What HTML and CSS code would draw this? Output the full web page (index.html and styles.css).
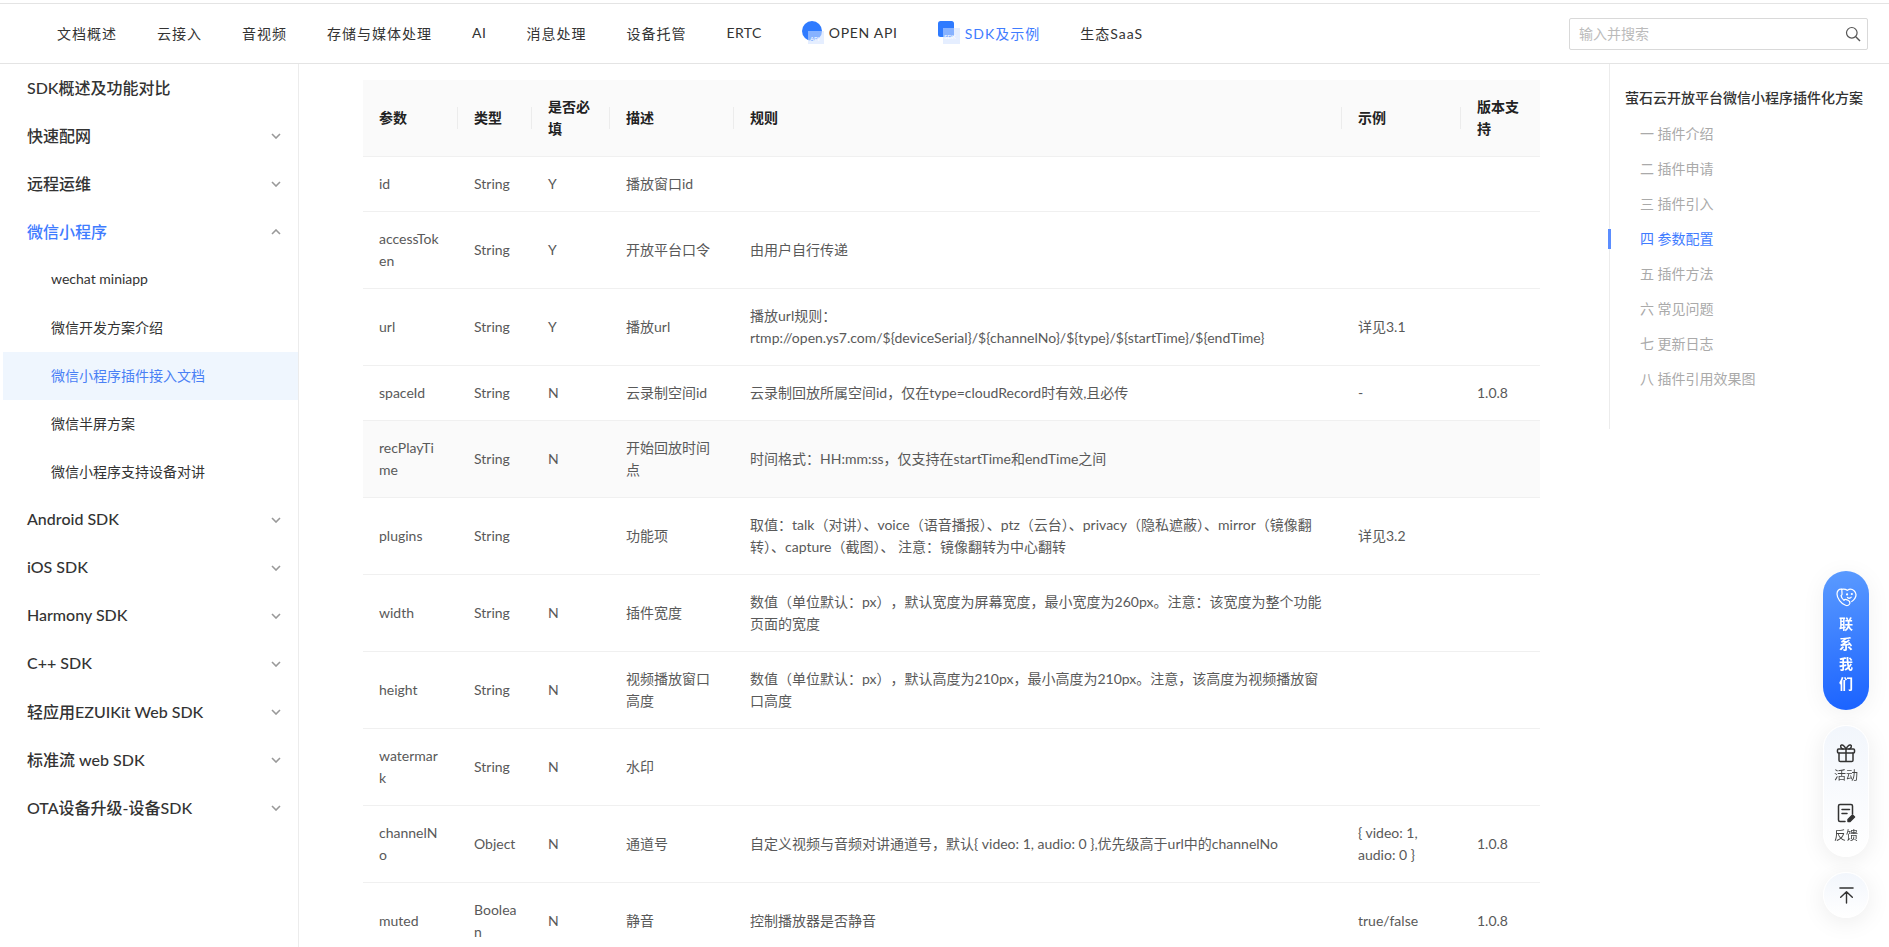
FILE: index.html
```html
<!DOCTYPE html>
<html lang="zh-CN">
<head>
<meta charset="utf-8">
<title>微信小程序插件接入文档</title>
<link rel="stylesheet" href="styles.css">
</head>
<body>
<div class="page">
  <header class="topbar">
    <nav class="topnav">
      <a>文档概述</a><a>云接入</a><a>音视频</a><a>存储与媒体处理</a><a class="ls-ai">AI</a><a>消息处理</a><a>设备托管</a><a class="ls-ertc">ERTC</a>
      <a class="with-icon ls-api">
        <svg class="nav-icon" viewBox="0 0 22 23"><circle cx="10" cy="10" r="10" fill="#2f7bff"/><rect x="6" y="10" width="16" height="13" fill="#cfe0ff" fill-opacity=".55"/><text x="8" y="20" class="nav-icon-text">API</text></svg>
        OPEN API</a>
      <a class="with-icon active">
        <svg class="nav-icon" viewBox="0 0 22 23"><rect x="0" y="0" width="16" height="16" rx="2.500" fill="#2f7bff"/><rect x="5" y="7" width="17" height="16" fill="#cfe0ff" fill-opacity=".55"/><text x="6" y="18" class="nav-icon-text">SDK</text></svg>
        SDK及示例</a>
      <a>生态SaaS</a>
    </nav>
    <div class="search">
      <span class="search-ph">输入并搜索</span>
      <svg class="search-icon" viewBox="0 0 16 16"><circle cx="6.800" cy="6.800" r="5.300" fill="none" stroke="#555" stroke-width="1.200"/><path d="M10.800 10.800 15 15" stroke="#555" stroke-width="1.400" fill="none"/></svg>
    </div>
  </header>
  <div class="content">
    <aside class="sidebar">
      <div class="side-item">SDK概述及功能对比</div>
      <div class="side-item">快速配网<svg class="chev" viewBox="0 0 10 6"><path d="M1 1l4 4 4-4"/></svg></div>
      <div class="side-item">远程运维<svg class="chev" viewBox="0 0 10 6"><path d="M1 1l4 4 4-4"/></svg></div>
      <div class="side-item open">微信小程序<svg class="chev" viewBox="0 0 10 6"><path d="M1 5l4-4 4 4"/></svg></div>
      <div class="side-sub">wechat miniapp</div>
      <div class="side-sub">微信开发方案介绍</div>
      <div class="side-sub current">微信小程序插件接入文档</div>
      <div class="side-sub">微信半屏方案</div>
      <div class="side-sub">微信小程序支持设备对讲</div>
      <div class="side-item">Android SDK<svg class="chev" viewBox="0 0 10 6"><path d="M1 1l4 4 4-4"/></svg></div>
      <div class="side-item">iOS SDK<svg class="chev" viewBox="0 0 10 6"><path d="M1 1l4 4 4-4"/></svg></div>
      <div class="side-item">Harmony SDK<svg class="chev" viewBox="0 0 10 6"><path d="M1 1l4 4 4-4"/></svg></div>
      <div class="side-item">C++ SDK<svg class="chev" viewBox="0 0 10 6"><path d="M1 1l4 4 4-4"/></svg></div>
      <div class="side-item">轻应用EZUIKit Web SDK<svg class="chev" viewBox="0 0 10 6"><path d="M1 1l4 4 4-4"/></svg></div>
      <div class="side-item">标准流 web SDK<svg class="chev" viewBox="0 0 10 6"><path d="M1 1l4 4 4-4"/></svg></div>
      <div class="side-item">OTA设备升级-设备SDK<svg class="chev" viewBox="0 0 10 6"><path d="M1 1l4 4 4-4"/></svg></div>
    </aside>
    <main class="main">
      <table class="params">
        <colgroup><col class="c1"><col class="c2"><col class="c3"><col class="c4"><col class="c5"><col class="c6"><col class="c7"></colgroup>
        <thead>
          <tr><th>参数</th><th>类型</th><th>是否必填</th><th>描述</th><th>规则</th><th>示例</th><th>版本支持</th></tr>
        </thead>
        <tbody>
          <tr><td>id</td><td>String</td><td>Y</td><td>播放窗口id</td><td></td><td></td><td></td></tr>
          <tr><td>accessToken</td><td>String</td><td>Y</td><td>开放平台口令</td><td>由用户自行传递</td><td></td><td></td></tr>
          <tr><td>url</td><td>String</td><td>Y</td><td>播放url</td><td>播放url规则：<br>rtmp://open.ys7.com/${deviceSerial}/${channelNo}/${type}/${startTime}/${endTime}</td><td>详见3.1</td><td></td></tr>
          <tr><td>spaceId</td><td>String</td><td>N</td><td>云录制空间id</td><td>云录制回放所属空间id，仅在type=cloudRecord时有效,且必传</td><td>-</td><td>1.0.8</td></tr>
          <tr class="hover"><td>recPlayTime</td><td>String</td><td>N</td><td>开始回放时间点</td><td>时间格式：HH:mm:ss，仅支持在startTime和endTime之间</td><td></td><td></td></tr>
          <tr><td>plugins</td><td>String</td><td></td><td>功能项</td><td class="trim">取值：talk（对讲）、voice（语音播报）、ptz（云台）、privacy（隐私遮蔽）、mirror（镜像翻转）、capture（截图）、 注意：镜像翻转为中心翻转</td><td>详见3.2</td><td></td></tr>
          <tr><td>width</td><td>String</td><td>N</td><td>插件宽度</td><td>数值（单位默认：px），默认宽度为屏幕宽度，最小宽度为260px。注意：该宽度为整个功能页面的宽度</td><td></td><td></td></tr>
          <tr><td>height</td><td>String</td><td>N</td><td>视频播放窗口高度</td><td>数值（单位默认：px），默认高度为210px，最小高度为210px。注意，该高度为视频播放窗口高度</td><td></td><td></td></tr>
          <tr><td>watermark</td><td>String</td><td>N</td><td>水印</td><td></td><td></td><td></td></tr>
          <tr><td>channelNo</td><td>Object</td><td>N</td><td>通道号</td><td>自定义视频与音频对讲通道号，默认{ video: 1, audio: 0 },优先级高于url中的channelNo</td><td>{ video: 1, audio: 0 }</td><td>1.0.8</td></tr>
          <tr><td>muted</td><td>Boolean</td><td>N</td><td>静音</td><td>控制播放器是否静音</td><td>true/false</td><td>1.0.8</td></tr>
        </tbody>
      </table>
    </main>
    <aside class="toc">
      <div class="toc-title">萤石云开放平台微信小程序插件化方案</div>
      <div class="toc-item">一 插件介绍</div>
      <div class="toc-item">二 插件申请</div>
      <div class="toc-item">三 插件引入</div>
      <div class="toc-item active">四 参数配置</div>
      <div class="toc-item">五 插件方法</div>
      <div class="toc-item">六 常见问题</div>
      <div class="toc-item">七 更新日志</div>
      <div class="toc-item">八 插件引用效果图</div>
    </aside>
  </div>
</div>
<div class="floaters">
  <div class="contact">
    <svg class="contact-icon" viewBox="0 0 22 20" fill="none" stroke="#fff" stroke-width="1.300" stroke-linecap="round" stroke-linejoin="round">
      <path d="M6 1.200C3 .8 1 3 1 6.200c0 4.600 4.200 10 9 12 2 .8 4-.2 4.500-2 .3-1.500-.6-2.700-2-3.300l-1.600-.6c-1-.4-2-.1-2.600.7C6.500 11.500 5.500 9.500 5.300 8c.8-.4 1.200-1.200 1-2.100L6 1.200z"/>
      <path d="M6 1.400C8.500.6 10.500 1.500 12 2.500c2-1.600 5-1.400 7 .4 2.200 2 2.400 5.300.8 8-.8 1.300-2 2.500-3.300 3.300"/>
      <circle cx="11.600" cy="6.800" r=".5" fill="#fff"/><circle cx="16.600" cy="6.300" r=".5" fill="#fff"/>
      <path d="M12 10c1.300 1 3 .8 4-.4"/>
    </svg>
    <span>联</span><span>系</span><span>我</span><span>们</span>
  </div>
  <div class="tools">
    <div class="tool">
      <svg class="tool-icon" viewBox="0 0 20 20" fill="none" stroke="#333" stroke-width="1.500" stroke-linejoin="round" stroke-linecap="round">
        <rect x="1.500" y="6" width="17" height="4" rx="1"/>
        <path d="M3 10v7.200a1.300 1.300 0 0 0 1.300 1.300h11.400a1.300 1.300 0 0 0 1.300-1.300V10M10 6v12.500"/>
        <path d="M10 6C8.500 3 7 1.500 5.500 2S4.500 5.500 7 6M10 6c1.500-3 3-4.500 4.500-4S15.500 5.500 13 6"/>
      </svg>
      <span>活动</span>
    </div>
    <div class="tool">
      <svg class="tool-icon" viewBox="0 0 20 20" fill="none" stroke="#333" stroke-width="1.500" stroke-linejoin="round" stroke-linecap="round">
        <path d="M9 18.500H4a1.500 1.500 0 0 1-1.500-1.500V3A1.500 1.500 0 0 1 4 1.500h11A1.500 1.500 0 0 1 16.500 3v8"/>
        <path d="M6 6.500h7.500M6 10.500h5"/>
        <path d="M12 18.500v-2l4.500-4.500 2 2-4.500 4.500z" fill="#333"/>
      </svg>
      <span>反馈</span>
    </div>
  </div>
  <div class="totop">
    <svg class="totop-icon" viewBox="0 0 16 18" fill="none" stroke="#333" stroke-width="1.500" stroke-linecap="round" stroke-linejoin="round">
      <path d="M1 1.500h14M8 5.500v12M1.800 11.500 8 5.500l6.200 6"/>
    </svg>
  </div>
</div>
</body>
</html>
```
FILE: styles.css
```css
* { box-sizing: border-box; }
html, body { margin: 0; padding: 0; height: 100%; overflow: hidden; background: #fff; }
body {
  font-family: Lato, "Noto Sans CJK SC", sans-serif;
  font-size: 14px;
  color: #333;
  text-spacing-trim: space-all;
}
.page { height: 100vh; display: flex; flex-direction: column; padding-top: 3px; }

.topbar {
  flex: none;
  height: 61px;
  border-top: 1px solid #e4e4e4;
  border-bottom: 1px solid #e4e4e4;
  display: flex;
  align-items: center;
  justify-content: space-between;
  padding: 0 21px 0 57px;
}
.topnav { display: flex; align-items: center; gap: 40px; padding-bottom: 2px; font-size: 14px; letter-spacing: 1px; color: #333; }
.topnav a { display: flex; align-items: center; white-space: nowrap; }
.topnav .ls-ai { letter-spacing: .5px; }
.topnav .ls-ertc { letter-spacing: .4px; }
.topnav .ls-api { letter-spacing: .7px; }
.with-icon { gap: 5px; }
.topnav .active { color: #3f7cff; }
.nav-icon { width: 22px; height: 23px; }
.nav-icon-text { font-size: 6px; fill: #fff; letter-spacing: 0; }
.search {
  width: 299px;
  height: 32px;
  border: 1px solid #d9d9d9;
  border-radius: 2px;
  display: flex;
  align-items: center;
  justify-content: space-between;
  padding: 0 6px 0 9px;
}
.search-ph { color: #bbb; font-size: 14px; margin-bottom: 2px; }
.search-icon { width: 16px; height: 16px; }

.content { flex: 1; display: flex; min-height: 0; }

.sidebar { flex: none; width: 296px; margin-left: 3px; border-right: 1px solid #ececec; }
.side-item {
  height: 48px;
  display: flex;
  align-items: center;
  justify-content: space-between;
  padding: 0 17px 3px 24px;
  font-size: 16px;
  font-weight: 500;
  color: #333;
}
.side-item.open { color: #3f7cff; }
.chev { width: 10px; height: 6px; margin-top: 3px; fill: none; stroke: #999; stroke-width: 1.600; }
.side-sub {
  height: 48px;
  display: flex;
  align-items: center;
  padding: 0 0 3px 48px;
  font-size: 14px;
  color: #333;
}
.side-sub.current { background: #eff6fe; color: #4a80f5; }

.main { flex: 1; min-width: 0; padding: 16px 0 0 64px; overflow: hidden; }
.params { width: 1177px; table-layout: fixed; border-collapse: separate; border-spacing: 0; font-size: 14px; line-height: 22px; color: #595959; }
.c1 { width: 95px; } .c2 { width: 74px; } .c3 { width: 78px; } .c4 { width: 124px; }
.c5 { width: 608px; } .c6 { width: 119px; } .c7 { width: 79px; }
.params th, .params td { padding: 16px; border-bottom: 1px solid #f0f0f0; overflow-wrap: anywhere; text-align: left; }
.params td:nth-child(2) { padding-right: 13px; }
.params th { position: relative; background: #fafafa; color: #222; font-weight: 700; }
.params th:not(:last-child)::after {
  content: "";
  position: absolute;
  right: 0;
  top: 50%;
  width: 1px;
  height: 22px;
  margin-top: -11px;
  background: #ececec;
}
.params .hover td { background: #fafafa; }
.params .trim { text-spacing-trim: normal; }

.toc { flex: none; width: 280px; height: 365px; border-left: 1px solid #ececec; padding: 23px 0 0 15px; }
.toc-title { height: 22px; line-height: 22px; font-weight: 500; color: #333; white-space: nowrap; }
.toc-item { position: relative; height: 35px; line-height: 35px; padding-left: 15px; color: #aaa; }
.toc-title + .toc-item { margin-top: 7px; }
.toc-item.active { color: #3f7cff; }
.toc-item.active::before {
  content: "";
  position: absolute;
  left: -17px;
  top: 8px;
  width: 3px;
  height: 20px;
  background: #5b8dff;
}

.floaters { position: fixed; left: 1823px; top: 571px; width: 46px; display: flex; flex-direction: column; gap: 15px; }
.contact {
  height: 139px;
  border-radius: 23px;
  background: linear-gradient(170deg, #5b9bff 0%, #1a62ff 100%);
  box-shadow: 0 4px 24px rgba(0, 0, 0, .06);
  color: #fff;
  font-size: 14px;
  font-weight: 700;
  display: flex;
  flex-direction: column;
  align-items: center;
  padding-top: 17px;
  line-height: 20px;
}
.contact-icon { width: 21px; height: 19px; margin-bottom: 7px; }
.tools {
  height: 132px;
  border-radius: 23px;
  background: linear-gradient(180deg, #f2f6fc 0%, #fff 100%);
  border: 1px solid #fff;
  box-shadow: 0 4px 24px rgba(0, 0, 0, .08);
  display: flex;
  flex-direction: column;
  align-items: center;
  padding-top: 17px;
  gap: 19px;
}
.tool { display: flex; flex-direction: column; align-items: center; font-size: 12px; line-height: 16px; color: #444; gap: 5px; }
.tool-icon { width: 20px; height: 20px; }
.totop {
  height: 46px;
  border-radius: 50%;
  background: linear-gradient(180deg, #f2f6fc 0%, #fff 100%);
  border: 1px solid #fff;
  box-shadow: 0 4px 24px rgba(0, 0, 0, .08);
  display: flex;
  align-items: center;
  justify-content: center;
}
.totop-icon { width: 15px; height: 18px; }
```
